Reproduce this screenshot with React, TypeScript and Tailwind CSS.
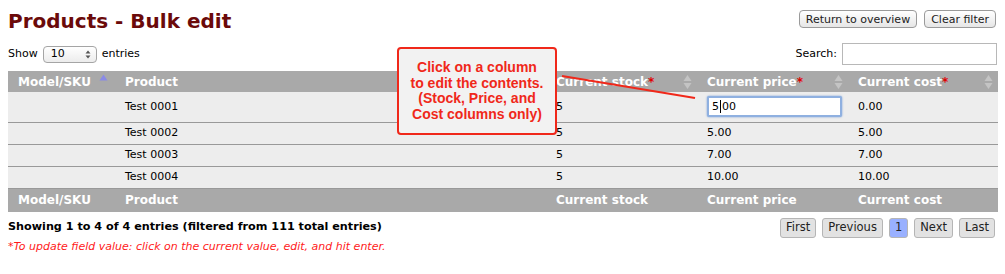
import React from "react";

const rows = [
  { product: "Test 0001", stock: "5", price: "5.00", cost: "0.00", editing: true },
  { product: "Test 0002", stock: "5", price: "5.00", cost: "5.00" },
  { product: "Test 0003", stock: "5", price: "7.00", cost: "7.00" },
  { product: "Test 0004", stock: "5", price: "10.00", cost: "10.00" },
];

function SortBoth() {
  return (
    <svg width="9" height="16" viewBox="0 0 9 16" className="absolute right-[5px] top-1/2 -translate-y-1/2">
      <path d="M4.5 1 L8.5 7 L0.5 7 Z" fill="#c4c4c4" />
      <path d="M4.5 15 L8.5 9 L0.5 9 Z" fill="#c4c4c4" />
    </svg>
  );
}

function SortAsc() {
  return (
    <svg width="9" height="7" viewBox="0 0 9 7" className="absolute right-[7px] top-[3px]">
      <path d="M4.5 0.5 L8.5 6.5 L0.5 6.5 Z" fill="#8a8ae6" />
    </svg>
  );
}

function Star() {
  return <span className="text-[#e00000]">*</span>;
}

function PageBtn({ label, active }: { label: string; active?: boolean }) {
  return (
    <span
      className={
        "inline-flex h-[20px] items-center rounded-[3px] border border-[#b5b5b5] px-[5px] text-[11.5px] text-[#222] " +
        (active ? "bg-[#99b0ff]" : "bg-[#e2e2e2]")
      }
    >
      {label}
    </span>
  );
}

export default function App() {
  return (
    <div className="relative w-[1005px] h-[274px] bg-white px-2 pt-[7px] text-[11px] text-black [font-family:'DejaVu_Sans',Verdana,sans-serif]">
      {/* Title + buttons */}
      <div className="flex items-start justify-between">
        <h1 className="text-[20px] font-bold leading-[28px] text-[#6b0a0a]">Products - Bulk edit</h1>
        <div className="mt-[3px] flex gap-[7px] pr-[1px]">
          <button className="h-[18px] rounded-[4px] border border-[#9a9a9a] bg-gradient-to-b from-white to-[#e6e6e6] px-[6px] text-[11px] leading-none text-[#222]">
            Return to overview
          </button>
          <button className="h-[18px] rounded-[4px] border border-[#9a9a9a] bg-gradient-to-b from-white to-[#e6e6e6] px-[6px] text-[11px] leading-none text-[#222]">
            Clear filter
          </button>
        </div>
      </div>

      {/* Length + search */}
      <div className="mt-[8px] flex items-center justify-between">
        <div className="flex items-center gap-[5px]">
          <span>Show</span>
          <span className="flex h-[17px] w-[54px] items-center justify-between rounded-[4px] border border-[#a5a5a5] bg-gradient-to-b from-white to-[#ececec] pl-[7px] pr-[5px] text-[11px]">
            10
            <svg width="6" height="9" viewBox="0 0 6 9">
              <path d="M3 0.5 L5.5 3.5 L0.5 3.5 Z" fill="#555" />
              <path d="M3 8.5 L5.5 5.5 L0.5 5.5 Z" fill="#555" />
            </svg>
          </span>
          <span>entries</span>
        </div>
        <div className="flex items-center gap-[5px]">
          <span>Search:</span>
          <span className="h-[22px] w-[155px] border border-[#b8b8b8] bg-white" />
        </div>
      </div>

      {/* Table */}
      <table className="mt-[6px] w-[990px] border-collapse table-fixed">
        <colgroup>
          <col className="w-[107px]" />
          <col className="w-[431px]" />
          <col className="w-[151px]" />
          <col className="w-[151px]" />
          <col className="w-[150px]" />
        </colgroup>
        <thead>
          <tr className="h-[21px] bg-[#a9a9a9] text-left text-[12px] font-bold text-white">
            <th className="relative pl-[10px]">Model/SKU<SortAsc /></th>
            <th className="pl-[10px]">Product</th>
            <th className="relative pl-[10px]">Current stock<Star /><SortBoth /></th>
            <th className="relative pl-[10px]">Current price<Star /><SortBoth /></th>
            <th className="relative pl-[10px]">Current cost<Star /><SortBoth /></th>
          </tr>
        </thead>
        <tbody>
          {rows.map((r) => (
            <tr key={r.product} className={"border-b border-[#999] bg-[#ededed] " + (r.editing ? "h-[30px]" : "h-[22px]")}>
              <td className="pl-[10px]"></td>
              <td className="pl-[10px]">{r.product}</td>
              <td className="pl-[10px]">{r.stock}</td>
              <td className="pl-[10px]">
                {r.editing ? (
                  <div className="flex h-[21px] w-[135px] items-center rounded-[2px] border-2 border-[#8fb0e0] bg-white pl-[3px] shadow-[0_0_2px_#6f9ad8]">
                    5<span className="mx-[1px] h-[13px] w-px bg-black" />00
                  </div>
                ) : (
                  r.price
                )}
              </td>
              <td className="pl-[10px]">{r.cost}</td>
            </tr>
          ))}
        </tbody>
        <tfoot>
          <tr className="h-[24px] bg-[#a9a9a9] text-left text-[12px] font-bold text-white">
            <th className="pl-[10px]">Model/SKU</th>
            <th className="pl-[10px]">Product</th>
            <th className="pl-[10px]">Current stock</th>
            <th className="pl-[10px]">Current price</th>
            <th className="pl-[10px]">Current cost</th>
          </tr>
        </tfoot>
      </table>

      {/* Info + pagination */}
      <div className="mt-[6px] flex items-start justify-between">
        <div>
          <p className="mt-[1px] text-[11.2px] font-bold">Showing 1 to 4 of 4 entries (filtered from 111 total entries)</p>
          <p className="mt-[3px] text-[11px] italic text-[#ff1a1a]">*To update field value: click on the current value, edit, and hit enter.</p>
        </div>
        <div className="flex gap-[6px] pr-[2px]">
          <PageBtn label="First" />
          <PageBtn label="Previous" />
          <PageBtn label="1" active />
          <PageBtn label="Next" />
          <PageBtn label="Last" />
        </div>
      </div>

      {/* Callout */}
      <svg className="pointer-events-none absolute left-0 top-0" width="1005" height="274">
        <line x1="562" y1="76" x2="695" y2="98" stroke="#f0281a" strokeWidth="2" />
      </svg>
      <div className="absolute left-[397px] top-[47px] flex h-[88px] w-[160px] flex-col items-center justify-center rounded-[4px] border-2 border-[#f0281a] bg-[#f2f2f2] text-center text-[14px] font-bold leading-[15.5px] text-[#f0281a] [font-family:'Liberation_Sans',Arial,sans-serif]">
        <span>Click on a column</span>
        <span>to edit the contents.</span>
        <span>(Stock, Price, and</span>
        <span>Cost columns only)</span>
      </div>
    </div>
  );
}
